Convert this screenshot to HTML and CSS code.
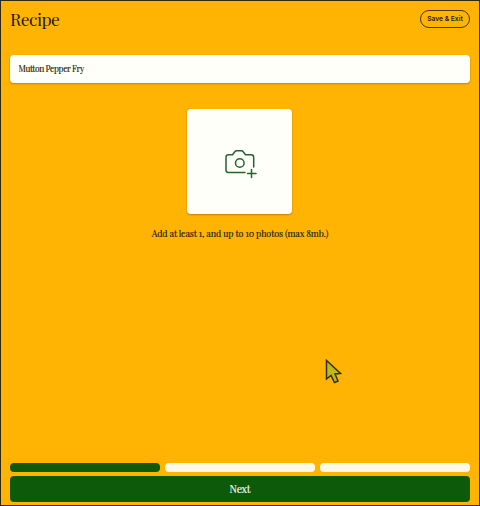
FILE: index.html
```html
<!DOCTYPE html>
<html lang="en">
<head>
<meta charset="utf-8">
<title>Recipe</title>
<link rel="stylesheet" href="styles.css">
</head>
<body>
<main class="page">
  <header class="header">
    <h1 class="title">Recipe</h1>
    <button class="save">Save &amp; Exit</button>
  </header>
  <div class="field"><span class="field-text">Mutton Pepper Fry</span></div>
  <section class="upload">
    <button class="photo" aria-label="Add photos">
      <svg class="camera" width="34" height="30" viewBox="0 0 34 30">
        <path d="M21 23.5H4.500Q2 23.500 2 21V8Q2 5.800 4.500 5.800H8.500L11 2.500Q11.500 1.700 12.500 1.700H17.500Q18.500 1.700 19 2.500L21.500 5.800H27Q29.700 5.800 29.700 8.500V18"/>
        <circle cx="15.800" cy="14" r="4.300"/>
        <path d="M27.500 20.500V28.500M23.500 24.500H32"/>
      </svg>
    </button>
    <p class="hint">Add at least 1, and up to 10 photos (max 8mb.)</p>
  </section>
  <footer class="footer">
    <div class="steps"><span class="step done"></span><span class="step"></span><span class="step"></span></div>
    <button class="next">Next</button>
  </footer>
</main>
<svg class="cursor" width="18" height="26" viewBox="0 0 18 26"><path d="M1.500 1.500V20L6 16.500L9.500 23.500L13 22L10 15L15.500 14.500Z"/></svg>
</body>
</html>
```
FILE: styles.css
```css
* { box-sizing: border-box; }
body { margin: 0; background: #ffb303; color: #241b08; font-family: "Playfair Display", "Liberation Serif", serif; }
button { font: inherit; color: inherit; margin: 0; padding: 0; }
.page {
  height: 506px;
  display: flex;
  flex-direction: column;
  padding: 9px 9px 3px;
  border: 1px solid #33290f;
}
.header { display: flex; justify-content: space-between; height: 45px; align-items: flex-start; }
.title { margin: 0; font-size: 17.5px; line-height: 18px; font-weight: 400; letter-spacing: -0.6px; }
.save {
  width: 50px;
  height: 18px;
  border: 1px solid #4a370c;
  border-radius: 9px;
  background: none;
  font: 600 6.7px/17px Inter, "Liberation Sans", sans-serif;
  white-space: nowrap;
}
.field {
  height: 28px;
  padding-left: 8.5px;
  border-radius: 4px;
  background: #fffffa;
  box-shadow: 0 1px 2px rgba(80, 50, 0, .35);
  font-size: 8.5px;
  letter-spacing: -0.38px;
  line-height: 28px;
  -webkit-text-stroke: 0.15px;
}
.upload { display: flex; flex-direction: column; align-items: center; margin-top: 26px; }
.photo {
  display: flex;
  width: 105px;
  height: 105px;
  margin-right: 1px;
  padding: 40px 0 0 37px;
  border: 0;
  border-radius: 4px;
  background: #fffffa;
  box-shadow: 0 1px 2px rgba(80, 50, 0, .35);
}
.camera { fill: none; stroke: #23642a; stroke-width: 1.5; stroke-linecap: round; stroke-linejoin: round; }
.hint { margin: 13px 0 0; font-size: 9px; letter-spacing: -0.12px; line-height: 13px; white-space: nowrap; -webkit-text-stroke: 0.15px; }
.footer { margin-top: auto; }
.steps { display: grid; grid-template-columns: repeat(3, 1fr); gap: 5px; margin-bottom: 4px; }
.step { height: 9px; border-radius: 4px; background: #fdf9e6; }
.done { background: #0d5a0b; }
.next { display: block; width: 100%; height: 26px; border: 0; border-radius: 4px; background: #0d5a0b; color: #f3f7ec; font-size: 10.5px; letter-spacing: -0.2px; line-height: 26px; -webkit-text-stroke: 0.2px; }
.cursor { position: absolute; left: 325px; top: 359px; fill: #c3b913; stroke: #343115; stroke-width: 1.5; }
```
